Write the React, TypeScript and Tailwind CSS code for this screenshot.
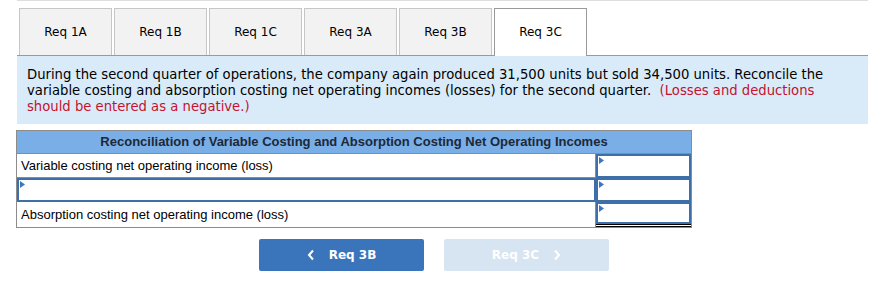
import React from "react";

const Tri = () => (
  <svg className="absolute left-[1px] top-[1px]" width="5" height="7" viewBox="0 0 5 7">
    <polygon points="0,0 5,3.5 0,7" fill="#3b78c4" />
  </svg>
);

const InputCell = ({ double = false }: { double?: boolean }) => (
  <div className="relative w-[95px] shrink-0 flex flex-col">
    <div className="relative flex-1 border-2 border-[#3e6fa8] bg-white">
      <Tri />
    </div>
    {double && <div className="h-[3px] border-t border-b border-black" />}
  </div>
);

export default function App() {
  const tabs = ["Req 1A", "Req 1B", "Req 1C", "Req 3A", "Req 3B", "Req 3C"];
  return (
    <div className="w-[879px] h-[307px] bg-white" style={{ fontFamily: "'DejaVu Sans', Verdana, sans-serif" }}>
      <div className="ml-[17px] w-[851px]">
        <div className="h-[1px] bg-[#dedede]" />
        <div className="mt-[7px] flex gap-[2px] pl-[2px] border-b border-[#9a9a9a] h-[48px]">
          {tabs.map((t, i) => (
            <div
              key={t}
              className={
                i === 5
                  ? "w-[93px] h-[48px] -mb-[1px] pb-[1px] bg-white border border-b-0 border-[#9a9a9a] flex items-center justify-center text-[12px] text-black"
                  : "w-[93px] h-[47px] bg-[#f2f2f2] border border-b-0 border-[#c6c6c6] flex items-center justify-center text-[12px] text-black"
              }
            >
              {t}
            </div>
          ))}
        </div>
        <div className="bg-[#d9ebf9] px-[10px] pt-[11px] pb-[9px] text-[13.2px] leading-[16px] text-black h-[68px] whitespace-nowrap">
          During the second quarter of operations, the company again produced 31,500 units but sold 34,500 units. Reconcile the
          <br />
          variable costing and absorption costing net operating incomes (losses) for the second quarter.{"\u00a0 "}
          <span className="text-[#c4122f]">(Losses and deductions</span>
          <br />
          <span className="text-[#c4122f]">should be entered as a negative.)</span>
        </div>
      </div>

      <div
        className="ml-[16px] mt-[6px] w-[676px] border border-[#8c8c8c] text-[13px] text-black"
        style={{ fontFamily: "'Liberation Sans', Arial, sans-serif" }}
      >
        <div className="h-[23px] bg-[#7aaee6] border-b border-[#8c8c8c] flex items-center justify-center font-bold text-[13px] text-[#1c2838]">
          Reconciliation of Variable Costing and Absorption Costing Net Operating Incomes
        </div>
        <div className="flex h-[24px]">
          <div className="flex-1 flex items-center pl-[4px] pt-[1px] border-b border-[#8c8c8c] border-r">Variable costing net operating income (loss)</div>
          <InputCell />
        </div>
        <div className="flex h-[24px]">
          <div className="relative flex-1 border-2 border-[#3e6fa8] bg-white">
            <Tri />
          </div>
          <InputCell />
        </div>
        <div className="flex h-[25px]">
          <div className="flex-1 flex items-center pl-[4px] pt-[1px] border-r border-[#8c8c8c]">Absorption costing net operating income (loss)</div>
          <InputCell double />
        </div>
      </div>

      <div className="ml-[259px] mt-[11px] flex gap-[20px]" style={{ fontFamily: "'DejaVu Sans', Verdana, sans-serif" }}>
        <div className="w-[165px] h-[32px] rounded-[2px] bg-[#3a75bb] text-white font-bold text-[12px] flex items-center justify-center gap-[14px]">
          <svg width="8" height="12" viewBox="0 0 8 12"><path d="M6 1.5 L2 6 L6 10.5" stroke="white" strokeWidth="2" fill="none" /></svg>
          <span>Req 3B</span>
        </div>
        <div className="w-[165px] h-[32px] rounded-[2px] bg-[#d7e4f2] text-white font-bold text-[12px] flex items-center justify-center gap-[14px]">
          <span>Req 3C</span>
          <svg width="8" height="12" viewBox="0 0 8 12"><path d="M2 1.5 L6 6 L2 10.5" stroke="white" strokeWidth="2" fill="none" /></svg>
        </div>
      </div>
    </div>
  );
}
